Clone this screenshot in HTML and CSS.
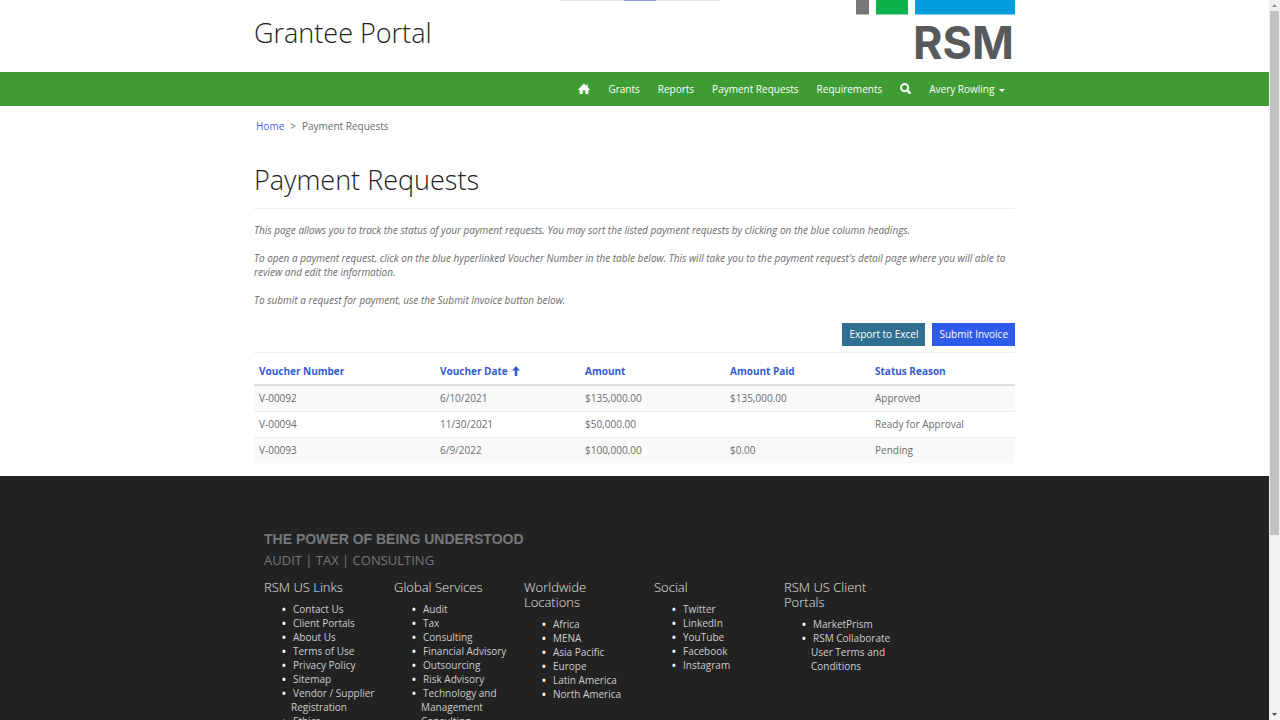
FILE: index.html
```html
<!DOCTYPE html>
<html lang="en">
<head>
    <meta charset="UTF-8">
    <meta name="viewport" content="width=device-width, initial-scale=1.0">
    <title>Payment Requests - Grantee Portal</title>
    <link rel="stylesheet" href="styles.css">
</head>
<body>

<div class="page">
    <div class="top-strip"><span></span></div>

    <header class="container header">
        <div class="site-title">Grantee Portal</div>
        <svg class="logo" width="160" height="72" viewBox="0 0 160 72" role="img" aria-label="RSM">
            <rect x="1" y="0" width="13" height="14.5" fill="#77777a"/>
            <rect x="21" y="0" width="32" height="14.5" fill="#0cb14b"/>
            <rect x="60" y="0" width="100" height="14.5" fill="#009cde"/>
            <text class="logo-text" x="58" y="59">RSM</text>
        </svg>
    </header>

    <nav class="navbar">
        <div class="container nav-links">
            <a href="#" aria-label="Home">
                <svg width="12" height="12" viewBox="0 0 12 12" fill="#fff">
                    <path d="M6 .6 8.4 2.9V1.6h1.4v2.7L12 6.5l-.6.6h-1V11H7.3V7.6H4.8V11H1.6V7.1H.6L0 6.5z"/>
                </svg>
            </a>
            <a href="#">Grants</a>
            <a href="#">Reports</a>
            <a href="#">Payment Requests</a>
            <a href="#">Requirements</a>
            <a href="#" aria-label="Search">
                <svg width="11" height="12" viewBox="0 0 11 12" fill="none" stroke="#fff">
                    <circle cx="4.6" cy="4.6" r="3.6" stroke-width="1.9"/>
                    <path d="M7.3 7.4 9.7 9.8" stroke-width="2.4" stroke-linecap="round"/>
                </svg>
            </a>
            <a href="#">Avery Rowling <span class="caret"></span></a>
        </div>
    </nav>

    <main class="container">
        <div class="breadcrumb">
            <a href="#">Home</a>
            <span class="separator">&gt;</span>
            <span>Payment Requests</span>
        </div>

        <h1>Payment Requests</h1>

        <div class="intro">
            <p>This page allows you to track the status of your payment requests. You may sort the listed payment requests by clicking on the blue column headings.</p>
            <p>To open a payment request, click on the blue hyperlinked Voucher Number in the table below. This will take you to the payment request's detail page where you will able to review and edit the information.</p>
            <p>To submit a request for payment, use the Submit Invoice button below.</p>
        </div>

        <div class="actions">
            <button class="btn btn-export">Export to Excel</button>
            <button class="btn btn-submit">Submit Invoice</button>
        </div>

        <table class="grid">
            <colgroup>
                <col class="col-number">
                <col class="col-other">
                <col class="col-other">
                <col class="col-other">
                <col class="col-other">
            </colgroup>
            <thead>
                <tr>
                    <th><a href="#">Voucher Number</a></th>
                    <th><a href="#">Voucher Date
                        <svg width="8" height="10" viewBox="0 0 8 10" fill="#335bd6"><path d="M4 0 8 4.4H5.3V10H2.7V4.4H0z"/></svg></a></th>
                    <th><a href="#">Amount</a></th>
                    <th><a href="#">Amount Paid</a></th>
                    <th><a href="#">Status Reason</a></th>
                </tr>
            </thead>
            <tbody>
                <tr><td>V-00092</td><td>6/10/2021</td><td>$135,000.00</td><td>$135,000.00</td><td>Approved</td></tr>
                <tr><td>V-00094</td><td>11/30/2021</td><td>$50,000.00</td><td></td><td>Ready for Approval</td></tr>
                <tr><td>V-00093</td><td>6/9/2022</td><td>$100,000.00</td><td>$0.00</td><td>Pending</td></tr>
            </tbody>
        </table>
    </main>

    <footer class="footer">
        <div class="container">
            <div class="footer-inner">
                <div class="tagline">THE POWER OF BEING UNDERSTOOD</div>
                <div class="services">AUDIT | TAX | CONSULTING</div>
                <div class="footer-columns">
                    <div class="footer-column">
                        <h2>RSM US Links</h2>
                        <ul>
                            <li><a href="#">Contact Us</a></li>
                            <li><a href="#">Client Portals</a></li>
                            <li><a href="#">About Us</a></li>
                            <li><a href="#">Terms of Use</a></li>
                            <li><a href="#">Privacy Policy</a></li>
                            <li><a href="#">Sitemap</a></li>
                            <li><a href="#">Vendor / Supplier Registration</a></li>
                            <li><a href="#">Ethics</a></li>
                        </ul>
                    </div>
                    <div class="footer-column">
                        <h2>Global Services</h2>
                        <ul>
                            <li><a href="#">Audit</a></li>
                            <li><a href="#">Tax</a></li>
                            <li><a href="#">Consulting</a></li>
                            <li><a href="#">Financial Advisory</a></li>
                            <li><a href="#">Outsourcing</a></li>
                            <li><a href="#">Risk Advisory</a></li>
                            <li><a href="#">Technology and Management Consulting</a></li>
                        </ul>
                    </div>
                    <div class="footer-column">
                        <h2>Worldwide Locations</h2>
                        <ul>
                            <li><a href="#">Africa</a></li>
                            <li><a href="#">MENA</a></li>
                            <li><a href="#">Asia Pacific</a></li>
                            <li><a href="#">Europe</a></li>
                            <li><a href="#">Latin America</a></li>
                            <li><a href="#">North America</a></li>
                        </ul>
                    </div>
                    <div class="footer-column">
                        <h2>Social</h2>
                        <ul>
                            <li><a href="#">Twitter</a></li>
                            <li><a href="#">LinkedIn</a></li>
                            <li><a href="#">YouTube</a></li>
                            <li><a href="#">Facebook</a></li>
                            <li><a href="#">Instagram</a></li>
                        </ul>
                    </div>
                    <div class="footer-column">
                        <h2>RSM US Client Portals</h2>
                        <ul>
                            <li><a href="#">MarketPrism</a></li>
                            <li><a href="#">RSM Collaborate User Terms and Conditions</a></li>
                        </ul>
                    </div>
                </div>
            </div>
        </div>
    </footer>
</div>

<div class="scrollbar">
    <svg width="5" height="3" viewBox="0 0 5 3"><path d="M2.5 0 5 3H0z" fill="#8a8a8a"/></svg>
    <div class="scroll-track"><div class="scroll-thumb"></div></div>
    <svg width="5" height="3" viewBox="0 0 5 3"><path d="M0 0h5L2.5 3z" fill="#505050"/></svg>
</div>

</body>
</html>
```
FILE: styles.css
```css
body {
    display: flex;
    height: 100vh;
    margin: 0;
    overflow: hidden;
    font-family: "Open Sans", "Noto Sans", sans-serif;
    font-size: 10px;
    line-height: 14px;
    color: #6b6b6b;
    background-color: #fff;
}

a {
    text-decoration: none;
}

.page {
    position: relative;
    flex: 1;
    overflow: hidden;
}

.container {
    max-width: 761px;
    margin: 0 auto;
}

/* Thin progress strip over the top edge */
.top-strip {
    position: absolute;
    top: 0;
    left: 560px;
    width: 160px;
    height: 1px;
    background-color: #e4e4e8;
}

.top-strip span {
    display: block;
    width: 32px;
    height: 1px;
    margin: 0 auto;
    background-color: #8f9bdc;
}

/* Header */
.header {
    display: flex;
    justify-content: space-between;
    height: 72px;
}

.site-title {
    padding-top: 12px;
    font-size: 27px;
    font-weight: 300;
    line-height: 41px;
    color: #222;
}

.logo {
    overflow: visible;
}

.logo-text {
    font-family: Inter, "Liberation Sans", sans-serif;
    font-size: 45px;
    font-weight: bold;
    fill: #58595b;
}

.navbar {
    background-color: #3f9c35;
}

.nav-links {
    display: flex;
    align-items: center;
    justify-content: flex-end;
    gap: 18px;
    height: 34px;
}

.nav-links a {
    color: #fff;
}

.nav-links a:last-child {
    margin-right: 10px;
}

.nav-links svg {
    display: block;
}

.caret {
    display: inline-block;
    margin-left: 2px;
    border-top: 3px solid #fff;
    border-left: 3px solid transparent;
    border-right: 3px solid transparent;
    vertical-align: middle;
}

/* Content */
.breadcrumb {
    display: flex;
    gap: 6px;
    padding: 13px 2px 0;
}

.breadcrumb a {
    color: #4a5fe0;
}

h1 {
    margin: 26px 0 14px;
    padding-bottom: 8px;
    border-bottom: 1px solid #eee;
    font-size: 27px;
    font-weight: 300;
    line-height: 41px;
    color: #222;
}

.intro {
    font-style: italic;
}

.intro p {
    margin: 0 0 14px;
}

.actions {
    display: flex;
    justify-content: flex-end;
    gap: 7px;
    padding-top: 2px;
    padding-bottom: 6px;
    border-bottom: 1px solid #eee;
}

.btn {
    padding: 4px 7px 5px;
    border: none;
    font-family: inherit;
    font-size: 10px;
    line-height: 14px;
    color: #fff;
}

.btn-export {
    background-color: #2f6f8f;
}

.btn-submit {
    background-color: #2f5bea;
}

.grid {
    width: 100%;
    margin-bottom: 13px;
    border-collapse: collapse;
    table-layout: fixed;
}

.col-number {
    width: 181px;
}

.col-other {
    width: 145px;
}

.grid th {
    padding: 11px 5px 6px;
    border-bottom: 2px solid #ddd;
    text-align: left;
}

.grid th a {
    color: #335bd6;
}

.grid th svg {
    margin-left: 2px;
    vertical-align: -1px;
}

.grid td {
    padding: 5px 5px 6px;
    border-bottom: 1px solid #eee;
}

.grid tbody tr:nth-child(odd) {
    background-color: #f9f9f9;
}

.grid tbody tr:last-child td {
    border-bottom: none;
}

/* Footer */
.footer {
    background-color: #222;
}

.footer-inner {
    padding: 53px 10px 40px;
}

.tagline {
    font-family: "Liberation Sans", Arial, sans-serif;
    font-size: 14px;
    font-weight: bold;
    line-height: 20px;
    color: #75787b;
}

.services {
    font-size: 13px;
    line-height: 22px;
    color: #75787b;
}

.footer-columns {
    display: flex;
    gap: 12px;
    padding-top: 9px;
}

.footer-column {
    width: 118px;
}

.footer-column h2 {
    margin: 0 0 7px;
    font-size: 13px;
    font-weight: 300;
    line-height: 15px;
    color: #e2e2e2;
}

.footer-column ul {
    margin: 0;
    padding-left: 27px;
    color: #fff;
}

.footer-column li::marker {
    content: "•\00a0\00a0";
    font-weight: bold;
}

.footer-column a {
    margin-left: 2px;
    color: #ccc;
}

/* Scrollbar */
.scrollbar {
    display: flex;
    flex-direction: column;
    align-items: center;
    gap: 4px;
    width: 11px;
    padding: 4px 0;
    box-sizing: border-box;
    background-color: #f1f1f1;
}

.scroll-track {
    flex: 1;
    width: 9px;
}

.scroll-thumb {
    height: 75%;
    background-color: #c1c1c1;
}
```
